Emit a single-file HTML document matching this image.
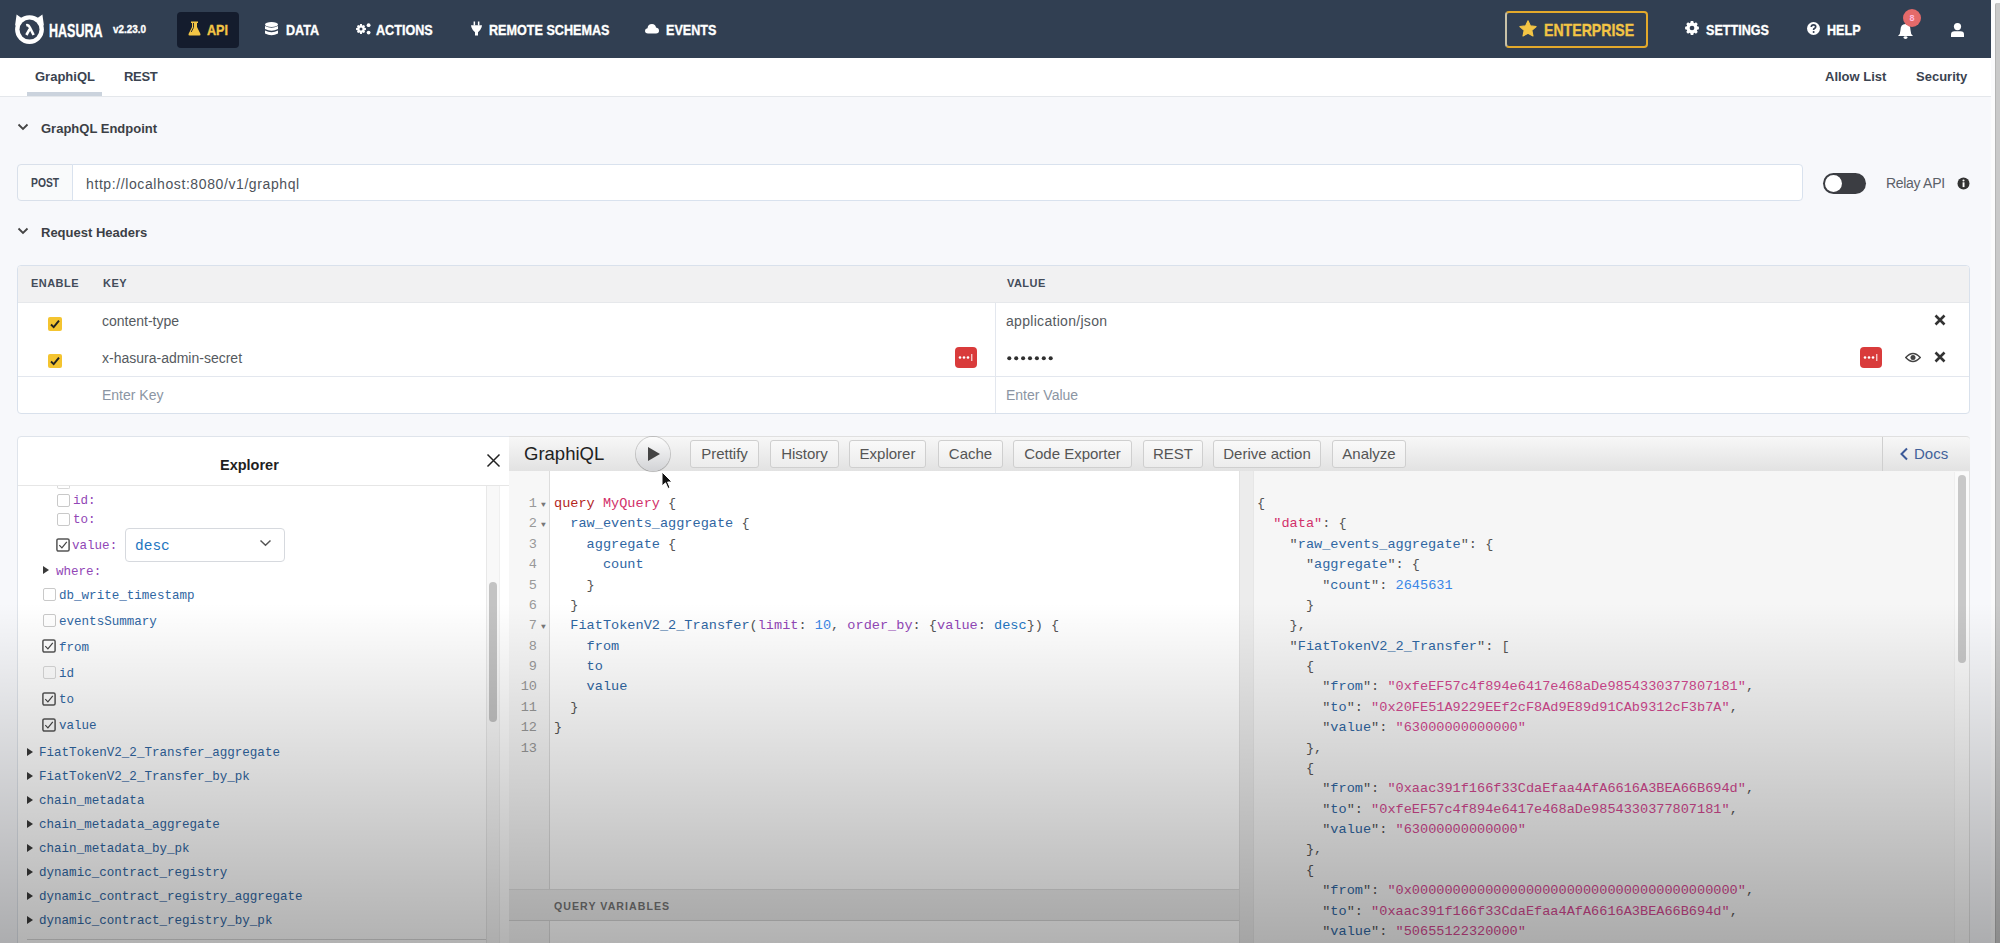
<!DOCTYPE html>
<html><head><meta charset="utf-8">
<style>
*{box-sizing:border-box;margin:0;padding:0}
html,body{width:2000px;height:943px;overflow:hidden;background:#f7f8fb;font-family:"Liberation Sans",sans-serif;position:relative}
.a{position:absolute;white-space:pre}
.nav{position:absolute;left:0;top:0;width:1991px;height:58px;background:#313f52}
.nt{position:absolute;color:#fff;font-weight:bold;font-size:15px;line-height:21px;transform-origin:0 50%;transform:scaleX(0.84);-webkit-text-stroke:0.35px currentColor}
.sub{position:absolute;left:0;top:58px;width:1991px;height:39px;background:#fff;border-bottom:1px solid #e4e7eb}
.st{position:absolute;font-weight:bold;font-size:13px;line-height:16px;color:#3b4350}
.mono{font-family:"Liberation Mono",monospace}
.ed{font-family:"Liberation Mono",monospace;font-size:13.58px;line-height:20.37px;white-space:pre}
.ex{font-family:"Liberation Mono",monospace;font-size:12.55px;white-space:pre;margin-top:1.5px}
.btn{position:absolute;top:440px;height:28px;border:1px solid #cfcfcf;border-radius:3px;background:linear-gradient(#f9f9f9,#ececec);font-size:15px;line-height:25px;color:#555;text-align:center}
.kw{color:#b3261e}.df{color:#d2306a}.pr{color:#2f66a2}.at{color:#9146b6}.nu{color:#3a86e6}.en{color:#2375c0}.pu{color:#555}
.str{color:#d2488f}
.cb{position:absolute;width:13px;height:13px;border:1px solid #c9c9c9;border-radius:2px;background:#fff}
.cbc{border:1.5px solid #555}
.tri{position:absolute;width:0;height:0;border-top:4.5px solid transparent;border-bottom:4.5px solid transparent;border-left:6.2px solid #3a3a3a}
</style></head><body>

<!-- NAVBAR -->
<div class="nav">
  <!-- logo -->
  <svg class="a" style="left:14px;top:14px" width="31" height="30" viewBox="0 0 31 30">
    <path d="M1 12 L2.6 0.6 L8.5 4.8 Z M30 12 L28.4 0.6 L22.5 4.8 Z" fill="#fff"/>
    <circle cx="15.5" cy="15.6" r="14.4" fill="#fff"/>
    <circle cx="15.5" cy="15.6" r="10" fill="#323e52"/>
    <path d="M12.2 11.2 Q14.5 10.6 15.6 13 L19.6 21 M15.6 15.2 L12.4 21" stroke="#fff" stroke-width="2.6" fill="none" stroke-linecap="butt"/>
  </svg>
  <div class="nt" style="left:49px;top:20px;font-size:19px;transform:scaleX(0.66)">HASURA</div>
  <div class="nt" style="left:113px;top:19px;font-size:11px;font-weight:bold;transform:scaleX(0.9)">v2.23.0</div>
  <div class="a" style="left:177px;top:12px;width:62px;height:36px;background:#141c2d;border-radius:4px"></div>
  <svg class="a" style="left:188px;top:21px" width="13" height="15" viewBox="0 0 13 15"><path d="M3 0.5 H10 V2 H9 V6 L12.5 13 Q12.8 14.5 11.3 14.5 H1.7 Q0.2 14.5 0.5 13 L4 6 V2 H3 Z" fill="#f3c545"/><path d="M5.5 2 V6.5 L3.2 11" stroke="#141c2d" stroke-width="0.9" fill="none"/></svg>
  <div class="nt" style="left:207px;top:19px;color:#f3c545">API</div>

  <svg class="a" style="left:265px;top:22px" width="13" height="14" viewBox="0 0 13 14"><ellipse cx="6.5" cy="2.5" rx="6.5" ry="2.5" fill="#fff"/><path d="M0 4 Q6.5 7.5 13 4 V7 Q6.5 10.5 0 7 Z M0 8.5 Q6.5 12 13 8.5 V11.5 Q6.5 15 0 11.5 Z" fill="#fff"/></svg>
  <div class="nt" style="left:286px;top:19px">DATA</div>

  <svg class="a" style="left:356px;top:23px" width="15" height="12" viewBox="0 0 15 12"><g transform="translate(0,1)"><path d="M8.61 3.83 L9.92 4.12 L9.92 5.88 L8.61 6.17 L8.39 6.73 L9.10 7.86 L7.86 9.10 L6.73 8.39 L6.17 8.61 L5.88 9.92 L4.12 9.92 L3.83 8.61 L3.27 8.39 L2.14 9.10 L0.90 7.86 L1.61 6.73 L1.39 6.17 L0.08 5.88 L0.08 4.12 L1.39 3.83 L1.61 3.27 L0.90 2.14 L2.14 0.90 L3.27 1.61 L3.83 1.39 L4.12 0.08 L5.88 0.08 L6.17 1.39 L6.73 1.61 L7.86 0.90 L9.10 2.14 L8.39 3.27 Z" fill="#fff"/><circle cx="5" cy="5" r="1.5" fill="#323e52"/></g><circle cx="12.6" cy="2.2" r="1.9" fill="#fff"/><circle cx="12.6" cy="9.6" r="1.9" fill="#fff"/></svg>
  <div class="nt" style="left:376px;top:19px">ACTIONS</div>

  <svg class="a" style="left:471px;top:21px" width="11" height="15" viewBox="0 0 11 15"><path d="M2.6 0.4 H4.1 V4.5 H2.6 Z M6.9 0.4 H8.4 V4.5 H6.9 Z" fill="#fff"/><path d="M0 4.2 H11 L10.6 6.2 Q9.2 10 7 11.2 V14.6 H4 V11.2 Q1.8 10 0.4 6.2 Z" fill="#fff"/></svg>
  <div class="nt" style="left:489px;top:19px">REMOTE SCHEMAS</div>

  <svg class="a" style="left:645px;top:23px" width="14" height="11" viewBox="0 0 14 11"><path d="M3 10.5 Q0 10.5 0 7.8 Q0 5.5 2.5 5.2 Q3 1 7 1 Q10.5 1 11 4.5 Q14 5 14 7.8 Q14 10.5 11 10.5 Z" fill="#fff"/></svg>
  <div class="nt" style="left:666px;top:19px">EVENTS</div>

  <!-- right -->
  <div class="a" style="left:1505px;top:11px;width:143px;height:37px;border:2px solid #e3a92b;border-left-color:#c9c2a8;border-radius:4px"></div>
  <svg class="a" style="left:1519px;top:20px" width="18" height="17" viewBox="0 0 24 23"><path d="M12 1 L15.3 8 L23 8.8 L17.2 14 L18.8 21.7 L12 17.8 L5.2 21.7 L6.8 14 L1 8.8 L8.7 8 Z" fill="#f3c545" stroke="#f3c545" stroke-width="1.5" stroke-linejoin="round"/></svg>
  <div class="nt" style="left:1544px;top:20px;color:#f3c545;font-size:17px;transform:scaleX(0.83)">ENTERPRISE</div>

  <svg class="a" style="left:1685px;top:21px" width="14" height="14" viewBox="0 0 16 16"><path d="M13.90 6.08 L15.88 6.59 L15.88 9.41 L13.90 9.92 L13.52 10.81 L14.56 12.57 L12.57 14.56 L10.81 13.52 L9.92 13.90 L9.41 15.88 L6.59 15.88 L6.08 13.90 L5.19 13.52 L3.43 14.56 L1.44 12.57 L2.48 10.81 L2.10 9.92 L0.12 9.41 L0.12 6.59 L2.10 6.08 L2.48 5.19 L1.44 3.43 L3.43 1.44 L5.19 2.48 L6.08 2.10 L6.59 0.12 L9.41 0.12 L9.92 2.10 L10.81 2.48 L12.57 1.44 L14.56 3.43 L13.52 5.19 Z" fill="#fff"/><circle cx="8" cy="8" r="2.7" fill="#323e52"/></svg>
  <div class="nt" style="left:1706px;top:19px">SETTINGS</div>

  <svg class="a" style="left:1807px;top:22px" width="13" height="13" viewBox="0 0 13 13"><circle cx="6.5" cy="6.5" r="6.5" fill="#fff"/><path d="M4.3 5 Q4.3 2.8 6.5 2.8 Q8.7 2.8 8.7 4.8 Q8.7 6 7.4 6.6 Q6.6 7 6.6 8" stroke="#323e52" stroke-width="1.7" fill="none"/><circle cx="6.6" cy="10" r="1" fill="#323e52"/></svg>
  <div class="nt" style="left:1827px;top:19px">HELP</div>

  <svg class="a" style="left:1897px;top:23px" width="17" height="16" viewBox="0 0 17 16"><path d="M8.5 1 Q13.5 1 13.5 7 Q13.5 11 16 13 H1 Q3.5 11 3.5 7 Q3.5 1 8.5 1 Z" fill="#fff"/><ellipse cx="8.5" cy="14.6" rx="2" ry="1.3" fill="#fff"/></svg>
  <div class="a" style="left:1903px;top:9px;width:18px;height:18px;border-radius:9px;background:#e46a6a;color:#fbd;font-size:9px;font-weight:bold;line-height:18px;text-align:center">8</div>

  <svg class="a" style="left:1951px;top:23px" width="13" height="14" viewBox="0 0 13 14"><circle cx="6.5" cy="3.6" r="3.6" fill="#fff"/><path d="M0 14 V11.5 Q0 8.2 3.5 8.2 H9.5 Q13 8.2 13 11.5 V14 Z" fill="#fff"/></svg>
</div>
<!-- page scrollbar -->
<div class="a" style="left:1991px;top:0;width:9px;height:943px;background:#fbfbfc"></div>
<div class="a" style="left:1995px;top:3px;width:5px;height:940px;background:#c9c9c9;border-left:1px solid #b4b4b4;border-radius:2px 0 0 0"></div>

<!-- SUBNAV -->
<div class="sub">
  <div class="st" style="left:35px;top:11px">GraphiQL</div>
  <div class="a" style="left:27px;top:34px;width:75px;height:4px;background:#cbd3dd"></div>
  <div class="st" style="left:124px;top:11px;letter-spacing:-0.3px">REST</div>
  <div class="st" style="left:1825px;top:11px">Allow List</div>
  <div class="st" style="left:1916px;top:11px">Security</div>
</div>

<!-- GraphQL Endpoint -->
<svg class="a" style="left:17px;top:123px" width="12" height="8" viewBox="0 0 12 8"><path d="M1.5 1.5 L6 6 L10.5 1.5" stroke="#444" stroke-width="1.8" fill="none"/></svg>
<div class="a st" style="left:41px;top:121px;color:#3c3f45">GraphQL Endpoint</div>

<div class="a" style="left:17px;top:164px;width:56px;height:37px;background:#f9fafb;border:1px solid #d9e0ea;border-radius:4px 0 0 4px"></div>
<div class="a" style="left:31px;top:175px;font-size:12px;font-weight:bold;color:#3e4652;line-height:16px;transform-origin:0 50%;transform:scaleX(0.86)">POST</div>
<div class="a" style="left:72px;top:164px;width:1731px;height:37px;background:#fff;border:1px solid #d9e2ee;border-radius:0 4px 4px 0"></div>
<div class="a" style="left:86px;top:175px;font-size:14px;color:#4d525a;line-height:18px;letter-spacing:0.6px">http://localhost:8080/v1/graphql</div>

<!-- toggle -->
<div class="a" style="left:1823px;top:173px;width:43px;height:21px;border-radius:11px;background:#3b3d42"></div>
<div class="a" style="left:1825px;top:175px;width:17px;height:17px;border-radius:9px;background:#fff"></div>
<div class="a" style="left:1886px;top:174px;font-size:14px;color:#5b6068;line-height:18px;letter-spacing:-0.3px">Relay API</div>
<svg class="a" style="left:1957px;top:177px" width="13" height="13" viewBox="0 0 13 13"><circle cx="6.5" cy="6.5" r="6" fill="#333"/><rect x="5.6" y="5.3" width="1.9" height="4.8" fill="#fff"/><circle cx="6.5" cy="3.5" r="1.05" fill="#fff"/></svg>

<!-- Request Headers -->
<svg class="a" style="left:17px;top:227px" width="12" height="8" viewBox="0 0 12 8"><path d="M1.5 1.5 L6 6 L10.5 1.5" stroke="#444" stroke-width="1.8" fill="none"/></svg>
<div class="a st" style="left:41px;top:225px;color:#3c3f45">Request Headers</div>

<div class="a" style="left:17px;top:265px;width:1953px;height:149px;background:#fff;border:1px solid #d9e1ec;border-radius:4px;overflow:hidden">
  <div class="a" style="left:0;top:0;width:1953px;height:37px;background:#f1f1f2;border-bottom:1px solid #e6e8eb"></div>
  <div class="a" style="left:0;top:110px;width:1953px;height:1px;background:#e3e7ee"></div>
  <div class="a" style="left:977px;top:37px;width:1px;height:112px;background:#e3e7ee"></div>
</div>
<div class="a" style="left:31px;top:276px;font-size:11px;font-weight:bold;color:#434c5a;letter-spacing:0.45px;line-height:14px">ENABLE</div>
<div class="a" style="left:103px;top:276px;font-size:11px;font-weight:bold;color:#434c5a;letter-spacing:0.45px;line-height:14px">KEY</div>
<div class="a" style="left:1007px;top:276px;font-size:11px;font-weight:bold;color:#434c5a;letter-spacing:0.45px;line-height:14px">VALUE</div>

<svg class="a" style="left:48px;top:317px" width="14" height="14" viewBox="0 0 14 14"><rect x="0" y="0" width="14" height="14" rx="2" fill="#f4c430"/><path d="M3 7.5 L5.7 10.2 L11 3.6" stroke="#222" stroke-width="1.9" fill="none"/></svg>
<svg class="a" style="left:48px;top:354px" width="14" height="14" viewBox="0 0 14 14"><rect x="0" y="0" width="14" height="14" rx="2" fill="#f4c430"/><path d="M3 7.5 L5.7 10.2 L11 3.6" stroke="#222" stroke-width="1.9" fill="none"/></svg>
<div class="a" style="left:102px;top:312px;font-size:14px;color:#555a60;line-height:18px">content-type</div>
<div class="a" style="left:102px;top:349px;font-size:14px;color:#555a60;line-height:18px">x-hasura-admin-secret</div>
<div class="a" style="left:102px;top:386px;font-size:14px;color:#8b95a3;line-height:18px">Enter Key</div>
<div class="a" style="left:1006px;top:312px;font-size:14px;color:#555a60;line-height:18px;letter-spacing:0.3px">application/json</div>
<svg class="a" style="left:1007px;top:355px" width="52" height="7" viewBox="0 0 52 7"><circle cx="2.30" cy="3.2" r="2.05" fill="#2f2f2f"/><circle cx="9.20" cy="3.2" r="2.05" fill="#2f2f2f"/><circle cx="16.10" cy="3.2" r="2.05" fill="#2f2f2f"/><circle cx="23.00" cy="3.2" r="2.05" fill="#2f2f2f"/><circle cx="29.90" cy="3.2" r="2.05" fill="#2f2f2f"/><circle cx="36.80" cy="3.2" r="2.05" fill="#2f2f2f"/><circle cx="43.70" cy="3.2" r="2.05" fill="#2f2f2f"/></svg>
<div class="a" style="left:1006px;top:386px;font-size:14px;color:#8b95a3;line-height:18px">Enter Value</div>

<!-- 1password icons -->
<svg class="a" style="left:955px;top:347px" width="22" height="21" viewBox="0 0 22 21"><rect width="22" height="21" rx="4" fill="#d93b3b"/><circle cx="5" cy="10.5" r="1.3" fill="#fff"/><circle cx="9" cy="10.5" r="1.3" fill="#fff"/><circle cx="13" cy="10.5" r="1.3" fill="#fff"/><rect x="16.3" y="7" width="1" height="7" fill="#fff"/></svg>
<svg class="a" style="left:1860px;top:347px" width="22" height="21" viewBox="0 0 22 21"><rect width="22" height="21" rx="4" fill="#d93b3b"/><circle cx="5" cy="10.5" r="1.3" fill="#fff"/><circle cx="9" cy="10.5" r="1.3" fill="#fff"/><circle cx="13" cy="10.5" r="1.3" fill="#fff"/><rect x="16.3" y="7" width="1" height="7" fill="#fff"/></svg>
<svg class="a" style="left:1934px;top:314px" width="12" height="12" viewBox="0 0 12 12"><path d="M1.5 1.5 L10.5 10.5 M10.5 1.5 L1.5 10.5" stroke="#333" stroke-width="2.6"/></svg>
<svg class="a" style="left:1905px;top:352px" width="16" height="11" viewBox="0 0 16 11"><path d="M0.8 5.5 Q8 -2.5 15.2 5.5 Q8 13.5 0.8 5.5 Z" fill="none" stroke="#444" stroke-width="1.6"/><circle cx="8" cy="5.5" r="2.5" fill="#444"/></svg>
<svg class="a" style="left:1934px;top:351px" width="12" height="12" viewBox="0 0 12 12"><path d="M1.5 1.5 L10.5 10.5 M10.5 1.5 L1.5 10.5" stroke="#333" stroke-width="2.6"/></svg>

<!-- GRAPHIQL AREA -->
<!-- Explorer panel -->
<div class="a" style="left:17px;top:436px;width:493px;height:520px;background:#fff;border:1px solid #dfe4eb;border-radius:4px 0 0 0"></div>
<div class="a" style="left:18px;top:485px;width:491px;height:1px;background:#e6e6e6"></div>
<div class="a" style="left:220px;top:456px;font-size:14.5px;font-weight:bold;color:#1f1f1f;line-height:18px">Explorer</div>
<svg class="a" style="left:486px;top:453px" width="15" height="15" viewBox="0 0 15 15"><path d="M1.5 1.5 L13.5 13.5 M13.5 1.5 L1.5 13.5" stroke="#222" stroke-width="1.45"/></svg>
<!-- explorer scrollbar -->
<div class="a" style="left:486px;top:486px;width:14px;height:457px;background:#f8f8f8;border-left:1px solid #e8e8e8;border-right:1px solid #efefef"></div>
<div class="a" style="left:489px;top:582px;width:8px;height:140px;background:#c3c3c3;border-radius:4px"></div>

<!-- explorer content -->
<div class="a" style="left:57px;top:486px;width:13px;height:3px;border:1px solid #d8d8d8;border-top:none;border-radius:0 0 2px 2px"></div>
<div class="cb" style="left:57px;top:494px"></div>
<div class="a ex at" style="left:73px;top:491px;line-height:16px">id:</div>
<div class="cb" style="left:57px;top:513px"></div>
<div class="a ex at" style="left:73px;top:510px;line-height:16px">to:</div>
<svg class="a" style="left:56px;top:538px" width="14" height="14" viewBox="0 0 14 14"><rect x="0.9" y="0.9" width="12.2" height="12.2" rx="1.5" fill="#fff" stroke="#555" stroke-width="1.5"/><path d="M3.3 7.2 L5.9 9.8 L10.8 3.8" stroke="#444" stroke-width="1.2" fill="none"/></svg>
<div class="a ex at" style="left:72px;top:536px;line-height:16px">value:</div>
<div class="a" style="left:125px;top:528px;width:160px;height:34px;background:#fff;border:1px solid #d6d9de;border-radius:4px"></div>
<div class="a ex en" style="left:135px;top:535px;font-size:14.5px;line-height:18px">desc</div>
<svg class="a" style="left:259px;top:539px" width="13" height="8" viewBox="0 0 13 8"><path d="M1.5 1.5 L6.5 6.2 L11.5 1.5" stroke="#555" stroke-width="1.5" fill="none"/></svg>

<div class="tri" style="left:43px;top:566px"></div>
<div class="a ex at" style="left:56px;top:562px;line-height:16px">where:</div>

<div class="cb" style="left:43px;top:588px"></div>
<div class="a ex pr" style="left:59px;top:586px;line-height:16px">db_write_timestamp</div>
<div class="cb" style="left:43px;top:614px"></div>
<div class="a ex pr" style="left:59px;top:612px;line-height:16px">eventsSummary</div>
<svg class="a" style="left:42px;top:639px" width="14" height="14" viewBox="0 0 14 14"><rect x="0.9" y="0.9" width="12.2" height="12.2" rx="1.5" fill="#fff" stroke="#555" stroke-width="1.5"/><path d="M3.3 7.2 L5.9 9.8 L10.8 3.8" stroke="#444" stroke-width="1.2" fill="none"/></svg>
<div class="a ex pr" style="left:59px;top:638px;line-height:16px">from</div>
<div class="cb" style="left:43px;top:666px;border-color:#d8d8d8"></div>
<div class="a ex pr" style="left:59px;top:664px;line-height:16px">id</div>
<svg class="a" style="left:42px;top:692px" width="14" height="14" viewBox="0 0 14 14"><rect x="0.9" y="0.9" width="12.2" height="12.2" rx="1.5" fill="#fff" stroke="#555" stroke-width="1.5"/><path d="M3.3 7.2 L5.9 9.8 L10.8 3.8" stroke="#444" stroke-width="1.2" fill="none"/></svg>
<div class="a ex pr" style="left:59px;top:690px;line-height:16px">to</div>
<svg class="a" style="left:42px;top:718px" width="14" height="14" viewBox="0 0 14 14"><rect x="0.9" y="0.9" width="12.2" height="12.2" rx="1.5" fill="#fff" stroke="#555" stroke-width="1.5"/><path d="M3.3 7.2 L5.9 9.8 L10.8 3.8" stroke="#444" stroke-width="1.2" fill="none"/></svg>
<div class="a ex pr" style="left:59px;top:716px;line-height:16px">value</div>

<div class="tri" style="left:27px;top:748px"></div><div class="a ex pr" style="left:39px;margin-top:2px;top:743px;line-height:16px">FiatTokenV2_2_Transfer_aggregate</div>
<div class="tri" style="left:27px;top:772px"></div><div class="a ex pr" style="left:39px;margin-top:2px;top:767px;line-height:16px">FiatTokenV2_2_Transfer_by_pk</div>
<div class="tri" style="left:27px;top:796px"></div><div class="a ex pr" style="left:39px;margin-top:2px;top:791px;line-height:16px">chain_metadata</div>
<div class="tri" style="left:27px;top:820px"></div><div class="a ex pr" style="left:39px;margin-top:2px;top:815px;line-height:16px">chain_metadata_aggregate</div>
<div class="tri" style="left:27px;top:844px"></div><div class="a ex pr" style="left:39px;margin-top:2px;top:839px;line-height:16px">chain_metadata_by_pk</div>
<div class="tri" style="left:27px;top:868px"></div><div class="a ex pr" style="left:39px;margin-top:2px;top:863px;line-height:16px">dynamic_contract_registry</div>
<div class="tri" style="left:27px;top:892px"></div><div class="a ex pr" style="left:39px;margin-top:2px;top:887px;line-height:16px">dynamic_contract_registry_aggregate</div>
<div class="tri" style="left:27px;top:916px"></div><div class="a ex pr" style="left:39px;margin-top:2px;top:911px;line-height:16px">dynamic_contract_registry_by_pk</div>
<div class="a" style="left:27px;top:939px;width:459px;height:1px;background:#d8d8d8"></div>

<!-- GraphiQL main -->
<div class="a" style="left:509px;top:436px;width:1461px;height:36px;background:linear-gradient(#f7f7f7,#e2e2e2);border-top:1px solid #e0e0e0;border-bottom:1px solid #d0d0d0;border-radius:0 4px 0 0"></div>
<div class="a" style="left:524px;top:442px;font-size:18.5px;color:#222;line-height:24px">GraphiQL</div>
<div class="a" style="z-index:3;left:636px;top:437px;width:34px;height:34px;border-radius:17px;background:linear-gradient(#fdfdfd,#d2d3d6);box-shadow:0 0 0 1px rgba(0,0,0,0.17),0 1px 1px rgba(0,0,0,0.12)"></div>
<svg class="a" style="z-index:3;left:647px;top:446px" width="14" height="16" viewBox="0 0 14 16"><path d="M1 1 L13 8 L1 15 Z" fill="#444"/></svg>
<div class="btn" style="left:690px;width:69px">Prettify</div>
<div class="btn" style="left:770px;width:69px">History</div>
<div class="btn" style="left:849px;width:77px">Explorer</div>
<div class="btn" style="left:938px;width:65px">Cache</div>
<div class="btn" style="left:1013px;width:119px">Code Exporter</div>
<div class="btn" style="left:1143px;width:60px">REST</div>
<div class="btn" style="left:1213px;width:108px">Derive action</div>
<div class="btn" style="left:1332px;width:74px">Analyze</div>
<div class="a" style="left:1882px;top:437px;width:1px;height:34px;background:#cfcfcf"></div>
<svg class="a" style="left:1899px;top:447px" width="10" height="14" viewBox="0 0 10 14"><path d="M8 1.5 L2.5 7 L8 12.5" stroke="#3B5998" stroke-width="2" fill="none"/></svg>
<div class="a" style="left:1914px;top:444px;font-size:15px;color:#41629a;line-height:20px">Docs</div>

<!-- editor -->
<div class="a" style="left:509px;top:471px;width:730px;height:472px;background:#fff"></div>
<div class="a" style="left:509px;top:471px;width:41px;height:472px;background:#f7f7f7;border-right:1px solid #dddddd"></div>
<div class="a ed" style="left:509px;top:494px;width:28px;text-align:right;color:#999">1
2
3
4
5
6
7
8
9
10
11
12
13</div>
<div class="a ed" style="left:541px;top:495px;color:#777;font-size:8px">▼
▼




▼</div>
<div class="a ed" style="left:554px;top:494px;color:#555"><span class="kw">query</span> <span class="df">MyQuery</span> {
  <span class="pr">raw_events_aggregate</span> {
    <span class="pr">aggregate</span> {
      <span class="pr">count</span>
    }
  }
  <span class="pr">FiatTokenV2_2_Transfer</span>(<span class="at">limit</span>: <span class="nu">10</span>, <span class="at">order_by</span>: {<span class="at">value</span>: <span class="en">desc</span>}) {
    <span class="pr">from</span>
    <span class="pr">to</span>
    <span class="pr">value</span>
  }
}
</div>
<!-- query variables -->
<div class="a" style="left:509px;top:889px;width:730px;height:32px;background:#eeeeee;border-top:1px solid #e0e0e0;border-bottom:1px solid #d6d6d6"></div>
<div class="a" style="left:554px;top:899px;font-size:10.6px;font-weight:bold;color:#767676;letter-spacing:1.05px;line-height:14px">QUERY VARIABLES</div>

<!-- divider -->
<div class="a" style="left:1239px;top:471px;width:15px;height:472px;background:#ececec;border-left:1px solid #e2e2e2;border-right:1px solid #e6e6e6"></div>

<!-- result -->
<div class="a" style="left:1254px;top:471px;width:716px;height:472px;background:#f6f6f6;border-right:1px solid #e0e0e0"></div>
<div class="a" style="left:1954px;top:472px;width:15px;height:471px;background:#fafafa;border-left:1px solid #efefef"></div>
<div class="a" style="left:1958px;top:475px;width:8px;height:188px;background:#c8c8c8;border-radius:4px"></div>
<div class="a ed" style="left:1257px;top:494px;color:#555">{
  <span class="df">"data"</span>: {
    "<span class="pr">raw_events_aggregate</span>": {
      "<span class="pr">aggregate</span>": {
        "<span class="pr">count</span>": <span class="nu">2645631</span>
      }
    },
    "<span class="pr">FiatTokenV2_2_Transfer</span>": [
      {
        "<span class="pr">from</span>": <span class="str">"0xfeEF57c4f894e6417e468aDe9854330377807181"</span>,
        "<span class="pr">to</span>": <span class="str">"0x20FE51A9229EEf2cF8Ad9E89d91CAb9312cF3b7A"</span>,
        "<span class="pr">value</span>": <span class="str">"63000000000000"</span>
      },
      {
        "<span class="pr">from</span>": <span class="str">"0xaac391f166f33CdaEfaa4AfA6616A3BEA66B694d"</span>,
        "<span class="pr">to</span>": <span class="str">"0xfeEF57c4f894e6417e468aDe9854330377807181"</span>,
        "<span class="pr">value</span>": <span class="str">"63000000000000"</span>
      },
      {
        "<span class="pr">from</span>": <span class="str">"0x0000000000000000000000000000000000000000"</span>,
        "<span class="pr">to</span>": <span class="str">"0xaac391f166f33CdaEfaa4AfA6616A3BEA66B694d"</span>,
        "<span class="pr">value</span>": <span class="str">"50655122320000"</span>
      },
</div>

<!-- cursor -->
<svg class="a" style="z-index:4;left:661px;top:471px" width="12" height="19" viewBox="0 0 12 19"><path d="M1 1 L1 15 L4.5 11.8 L7 17.5 L9 16.6 L6.6 11 L11 11 Z" fill="#111" stroke="#fff" stroke-width="1"/></svg>

<!-- video vignette -->
<div class="a" style="left:0;top:603px;width:2000px;height:340px;background:linear-gradient(rgba(0,0,0,0),rgba(0,0,0,0.30))"></div>


</body></html>
